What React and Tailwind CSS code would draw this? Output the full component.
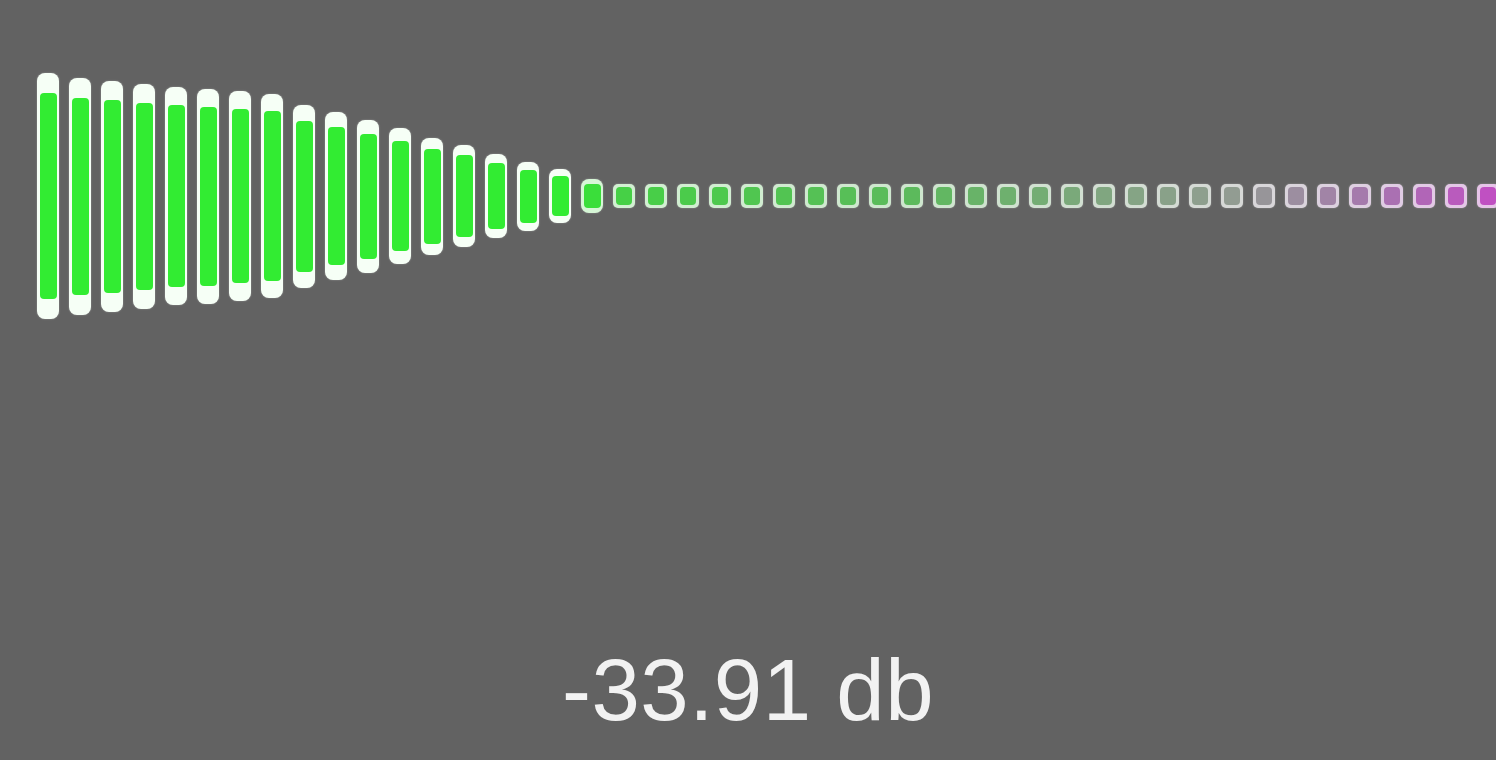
import React from 'react'

const heights = [246, 237, 231, 225, 218, 215, 210, 204, 183, 168, 153, 136, 117, 102, 84, 69, 54, 34]

// colour stops for the small squares: [index, inner rgb, border rgb]
const stops = [
  [17, [58, 222, 58], [214, 246, 214]],
  [18, [70, 208, 70], [210, 240, 210]],
  [27, [92, 186, 92], [206, 230, 206]],
  [33, [128, 166, 128], [210, 222, 210]],
  [37, [146, 156, 146], [214, 216, 214]],
  [39, [156, 142, 160], [218, 212, 220]],
  [42, [170, 112, 178], [224, 204, 228]],
  [45, [192, 80, 194], [230, 196, 232]],
]

function mix(a, b, t) {
  return a.map((v, i) => Math.round(v + (b[i] - v) * t))
}

function colorsAt(i) {
  if (i < 17) return { inner: 'rgb(50,236,50)', outer: 'rgb(246,255,246)' }
  for (let s = 0; s < stops.length - 1; s++) {
    const [i0, c0, b0] = stops[s]
    const [i1, c1, b1] = stops[s + 1]
    if (i >= i0 && i <= i1) {
      const t = i1 === i0 ? 0 : (i - i0) / (i1 - i0)
      return { inner: `rgb(${mix(c0, c1, t).join(',')})`, outer: `rgb(${mix(b0, b1, t).join(',')})` }
    }
  }
  const last = stops[stops.length - 1]
  return { inner: `rgb(${last[1].join(',')})`, outer: `rgb(${last[2].join(',')})` }
}

const bars = Array.from({ length: 46 }, (_, i) => {
  const h = heights[i] ?? 24
  const cap = h <= 24 ? 3 : Math.round(3 + h * 0.07)
  return { h, cap, ...colorsAt(i) }
})

function App() {
  return (
    <div className="w-full h-[760px] bg-[#626262] overflow-hidden flex flex-col font-['Liberation_Sans',Arial,sans-serif]">
      {/* Level meter */}
      <div className="mt-[73px] h-[246px] pl-[37px] flex items-center gap-[10px] blur-[0.6px]">
        {bars.map((b, i) => (
          <div
            key={i}
            className={`shrink-0 w-[22px] flex flex-col shadow-[0_0_2px_rgba(255,255,255,0.35)] ${b.h <= 24 ? 'rounded-[5px] px-[3px]' : 'rounded-[8px] px-[2.5px]'}`}
            style={{ height: b.h, backgroundColor: b.outer, paddingTop: b.cap, paddingBottom: b.cap }}
          >
            <div className="flex-1 rounded-[4px]" style={{ backgroundColor: b.inner }} />
          </div>
        ))}
      </div>

      {/* Readout */}
      <div className="mt-[327px] text-center text-[87px] leading-none text-[#f2f2f2] tracking-[0.5px] blur-[0.3px]">
        -33.91 db
      </div>
    </div>
  )
}

export default App
